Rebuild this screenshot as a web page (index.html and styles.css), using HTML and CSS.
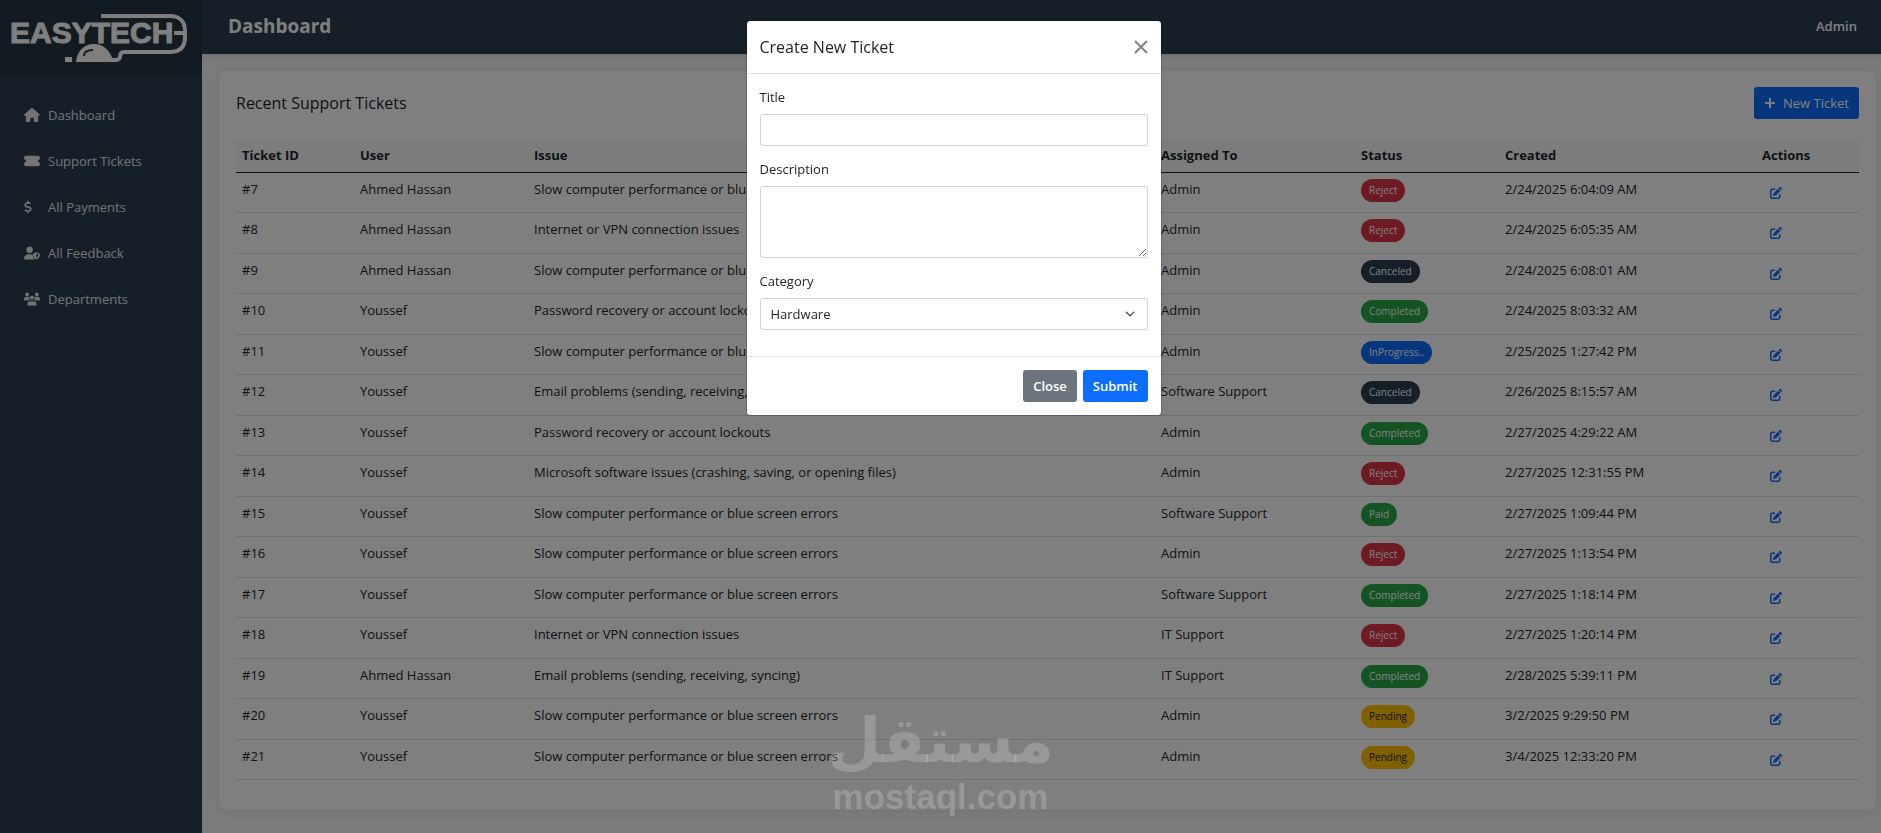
FILE: index.html
```html
<!doctype html>
<html lang="en">

<head>
    <meta charset="utf-8">
    <title>Dashboard</title>
    <link rel="stylesheet" href="styles.css">
</head>

<body>

    <!-- icons used more than once or in the menu -->
    <svg class="icon-defs" aria-hidden="true">
        <symbol id="icon-home" viewBox="0 0 576 512">
            <path d="M575.8 255.5c0 18-15 32.1-32 32.1l-32 0 .7 160.2c0 2.7-.2 5.4-.5 8.1l0 16.2c0 22.1-17.9 40-40 40l-80 0c-22.1 0-40-17.9-40-40l0-88c0-17.7-14.3-32-32-32l-64 0c-17.7 0-32 14.3-32 32l0 88c0 22.1-17.9 40-40 40l-80 0c-22.1 0-40-17.9-40-40l0-184.500-32 0c-18 0-32-14-32-32.100c0-9 3-17 10-24L266.400 8c7-7 15-8 22-8s15 2 21 7L564.800 231.500c8 7 12 15 11 24z" />
        </symbol>
        <symbol id="icon-ticket" viewBox="0 0 576 512">
            <path d="M64 64C29 64 0 93 0 128v64c35 0 64 29 64 64s-29 64-64 64v64c0 35 29 64 64 64h448c35 0 64-29 64-64v-64c-35 0-64-29-64-64s29-64 64-64v-64c0-35-29-64-64-64z" />
        </symbol>
        <symbol id="icon-dollar" viewBox="0 0 320 512">
            <path d="M160 0c17.700 0 32 14.300 32 32l0 35.700c1.600 .2 3.100 .4 4.700 .7c.4 .1 .7 .1 1.100 .2l48 8.800c17.400 3.200 28.900 19.900 25.700 37.200s-19.900 28.900-37.200 25.700l-47.500-8.700c-31.300-4.600-58.900-1.500-78.300 6.200s-27.200 18.300-29 28.100c-2 10.700-.5 16.700 1.200 20.400c1.800 3.900 5.500 8.300 12.800 13.200c16.300 10.700 41.300 17.700 73.700 26.300l2.900 .8c28.600 7.600 63.600 16.800 89.600 33.800c14.200 9.300 27.600 21.900 35.900 39.500c8.500 17.900 10.300 37.900 6.400 59.200c-6.900 38-33.100 63.400-65.600 76.700c-13.700 5.600-28.600 9.200-44.400 11l0 33.400c0 17.700-14.300 32-32 32s-32-14.300-32-32l0-34.900c-.4-.1-.9-.1-1.300-.2l-.2 0c-24.400-3.800-64.500-14.300-91.500-26.300c-16.100-7.200-23.400-26.100-16.200-42.200s26.100-23.400 42.200-16.200c20.900 9.300 55.300 18.500 75.200 21.600c31.900 4.700 58.200 2 76-5.300c16.900-6.900 24.600-16.900 26.800-28.900c1.900-10.600 .4-16.700-1.300-20.400c-1.900-4-5.600-8.400-13-13.300c-16.400-10.700-41.500-17.700-74-26.300l-2.800-.7c-28.500-7.500-63.600-16.700-89.600-33.700c-14.200-9.300-27.500-22-35.800-39.600c-8.400-17.900-10.100-37.900-6.100-59.200C23.700 116 52.300 91.200 84.800 78.300c13.300-5.300 27.900-8.900 43.200-11L128 32c0-17.700 14.300-32 32-32z" />
        </symbol>
        <symbol id="icon-user-shield" viewBox="0 0 640 512">
            <circle cx="224" cy="128" r="128" />
            <path d="M174 304C78 304 0 382 0 478c0 18 14 34 30 34h388c-45-45-72-105-75-178-20-20-50-30-70-30z" />
            <path fill-rule="evenodd" d="M496 224l128 50c10 4 16 12 16 22 0 90-40 180-144 216-104-36-144-126-144-216 0-10 6-18 16-22zm0 66v154c50-28 74-70 78-124z" />
        </symbol>
        <symbol id="icon-users" viewBox="0 0 640 512">
            <circle cx="128" cy="72" r="72" />
            <circle cx="512" cy="72" r="72" />
            <circle cx="320" cy="208" r="84" />
            <path d="M88 170h78c20 0 38 6 52 16-20 50-8 100 28 134H22c-12 0-22-10-22-22 0-80 40-128 88-128zM552 170h-78c-20 0-38 6-52 16 20 50 8 100-28 134h224c12 0 22-10 22-22 0-80-40-128-88-128z" />
            <path d="M244 346h152c64 0 116 60 116 138 0 16-12 28-28 28H156c-16 0-28-12-28-28 0-78 52-138 116-138z" />
        </symbol>
        <symbol id="icon-edit" viewBox="0 0 512 512">
            <path d="M471.600 21.700c-21.900-21.900-57.300-21.900-79.200 0L362.300 51.700l97.900 97.900 30.100-30.100c21.900-21.900 21.900-57.300 0-79.200L471.600 21.700zm-299.200 220c-6.100 6.100-10.800 13.600-13.500 21.900l-29.600 88.800c-2.900 8.600-.6 18.100 5.800 24.600s15.900 8.700 24.600 5.800l88.800-29.600c8.200-2.700 15.700-7.400 21.900-13.500L437.700 172.300 339.700 74.300 172.400 241.700zM96 64C43 64 0 107 0 160L0 416c0 53 43 96 96 96l256 0c53 0 96-43 96-96l0-96c0-17.700-14.300-32-32-32s-32 14.300-32 32l0 96c0 17.700-14.300 32-32 32L96 448c-17.700 0-32-14.300-32-32l0-256c0-17.700 14.300-32 32-32l96 0c17.700 0 32-14.300 32-32s-14.300-32-32-32L96 64z" />
        </symbol>
    </svg>

    <div class="layout">

        <aside class="sidebar">
            <div class="brand">
                <svg class="brand-logo" viewBox="0 0 176 48" role="img" aria-label="EasyTech">
                    <text class="brand-name" x="-1" y="30">EASYTECH</text>
                    <path class="brand-cable" d="M90 3h69c10 0 15 6 15 15v6c0 10-5 15-15 15h-46c-4 0-4 3-4 5-1 3-3 3-6 3h-14" />
                    <path class="brand-cable" d="M163 20h11" />
                    <path class="brand-fill" d="M65 49c1-11 8-18 18-18s16 7 19 16v2z" />
                    <path class="brand-fill" d="M54 44h7v5h-7z" />
                    <path class="brand-shine" d="M73 43c0-4 3-6 9-6" />
                </svg>
            </div>
            <nav class="menu">
                <a href="#"><svg class="menu-icon"><use href="#icon-home" /></svg>Dashboard</a>
                <a href="#"><svg class="menu-icon"><use href="#icon-ticket" /></svg>Support Tickets</a>
                <a href="#"><svg class="menu-icon menu-icon-narrow"><use href="#icon-dollar" /></svg>All Payments</a>
                <a href="#"><svg class="menu-icon"><use href="#icon-user-shield" /></svg>All Feedback</a>
                <a href="#"><svg class="menu-icon"><use href="#icon-users" /></svg>Departments</a>
            </nav>
        </aside>

        <div class="page">
            <header class="topbar">
                <h1>Dashboard</h1>
                <span class="user-name">Admin</span>
            </header>

            <main class="content">
                <section class="card">
                    <div class="card-head">
                        <h2>Recent Support Tickets</h2>
                        <button type="button" class="btn btn-primary btn-new">
                            <svg class="plus" viewBox="0 0 12 12"><path d="M6 1v10M1 6h10" /></svg>
                            New Ticket
                        </button>
                    </div>

                    <table class="tickets">
                        <thead>
                            <tr>
                                <th class="col-id">Ticket ID</th>
                                <th class="col-user">User</th>
                                <th>Issue</th>
                                <th class="col-assigned">Assigned To</th>
                                <th class="col-status">Status</th>
                                <th class="col-created">Created</th>
                                <th class="col-actions">Actions</th>
                            </tr>
                        </thead>
                        <tbody>
                            <tr>
                                <td>#7</td><td>Ahmed Hassan</td><td>Slow computer performance or blue screen errors</td><td>Admin</td>
                                <td><span class="badge badge-danger">Reject</span></td><td>2/24/2025 6:04:09 AM</td>
                                <td><button type="button" class="edit" aria-label="Edit ticket"><svg><use href="#icon-edit" /></svg></button></td>
                            </tr>
                            <tr>
                                <td>#8</td><td>Ahmed Hassan</td><td>Internet or VPN connection issues</td><td>Admin</td>
                                <td><span class="badge badge-danger">Reject</span></td><td>2/24/2025 6:05:35 AM</td>
                                <td><button type="button" class="edit" aria-label="Edit ticket"><svg><use href="#icon-edit" /></svg></button></td>
                            </tr>
                            <tr>
                                <td>#9</td><td>Ahmed Hassan</td><td>Slow computer performance or blue screen errors</td><td>Admin</td>
                                <td><span class="badge badge-dark">Canceled</span></td><td>2/24/2025 6:08:01 AM</td>
                                <td><button type="button" class="edit" aria-label="Edit ticket"><svg><use href="#icon-edit" /></svg></button></td>
                            </tr>
                            <tr>
                                <td>#10</td><td>Youssef</td><td>Password recovery or account lockouts</td><td>Admin</td>
                                <td><span class="badge badge-success">Completed</span></td><td>2/24/2025 8:03:32 AM</td>
                                <td><button type="button" class="edit" aria-label="Edit ticket"><svg><use href="#icon-edit" /></svg></button></td>
                            </tr>
                            <tr>
                                <td>#11</td><td>Youssef</td><td>Slow computer performance or blue screen errors</td><td>Admin</td>
                                <td><span class="badge badge-primary">InProgress..</span></td><td>2/25/2025 1:27:42 PM</td>
                                <td><button type="button" class="edit" aria-label="Edit ticket"><svg><use href="#icon-edit" /></svg></button></td>
                            </tr>
                            <tr>
                                <td>#12</td><td>Youssef</td><td>Email problems (sending, receiving, syncing)</td><td>Software Support</td>
                                <td><span class="badge badge-dark">Canceled</span></td><td>2/26/2025 8:15:57 AM</td>
                                <td><button type="button" class="edit" aria-label="Edit ticket"><svg><use href="#icon-edit" /></svg></button></td>
                            </tr>
                            <tr>
                                <td>#13</td><td>Youssef</td><td>Password recovery or account lockouts</td><td>Admin</td>
                                <td><span class="badge badge-success">Completed</span></td><td>2/27/2025 4:29:22 AM</td>
                                <td><button type="button" class="edit" aria-label="Edit ticket"><svg><use href="#icon-edit" /></svg></button></td>
                            </tr>
                            <tr>
                                <td>#14</td><td>Youssef</td><td>Microsoft software issues (crashing, saving, or opening files)</td><td>Admin</td>
                                <td><span class="badge badge-danger">Reject</span></td><td>2/27/2025 12:31:55 PM</td>
                                <td><button type="button" class="edit" aria-label="Edit ticket"><svg><use href="#icon-edit" /></svg></button></td>
                            </tr>
                            <tr>
                                <td>#15</td><td>Youssef</td><td>Slow computer performance or blue screen errors</td><td>Software Support</td>
                                <td><span class="badge badge-success">Paid</span></td><td>2/27/2025 1:09:44 PM</td>
                                <td><button type="button" class="edit" aria-label="Edit ticket"><svg><use href="#icon-edit" /></svg></button></td>
                            </tr>
                            <tr>
                                <td>#16</td><td>Youssef</td><td>Slow computer performance or blue screen errors</td><td>Admin</td>
                                <td><span class="badge badge-danger">Reject</span></td><td>2/27/2025 1:13:54 PM</td>
                                <td><button type="button" class="edit" aria-label="Edit ticket"><svg><use href="#icon-edit" /></svg></button></td>
                            </tr>
                            <tr>
                                <td>#17</td><td>Youssef</td><td>Slow computer performance or blue screen errors</td><td>Software Support</td>
                                <td><span class="badge badge-success">Completed</span></td><td>2/27/2025 1:18:14 PM</td>
                                <td><button type="button" class="edit" aria-label="Edit ticket"><svg><use href="#icon-edit" /></svg></button></td>
                            </tr>
                            <tr>
                                <td>#18</td><td>Youssef</td><td>Internet or VPN connection issues</td><td>IT Support</td>
                                <td><span class="badge badge-danger">Reject</span></td><td>2/27/2025 1:20:14 PM</td>
                                <td><button type="button" class="edit" aria-label="Edit ticket"><svg><use href="#icon-edit" /></svg></button></td>
                            </tr>
                            <tr>
                                <td>#19</td><td>Ahmed Hassan</td><td>Email problems (sending, receiving, syncing)</td><td>IT Support</td>
                                <td><span class="badge badge-success">Completed</span></td><td>2/28/2025 5:39:11 PM</td>
                                <td><button type="button" class="edit" aria-label="Edit ticket"><svg><use href="#icon-edit" /></svg></button></td>
                            </tr>
                            <tr>
                                <td>#20</td><td>Youssef</td><td>Slow computer performance or blue screen errors</td><td>Admin</td>
                                <td><span class="badge badge-warning">Pending</span></td><td>3/2/2025 9:29:50 PM</td>
                                <td><button type="button" class="edit" aria-label="Edit ticket"><svg><use href="#icon-edit" /></svg></button></td>
                            </tr>
                            <tr>
                                <td>#21</td><td>Youssef</td><td>Slow computer performance or blue screen errors</td><td>Admin</td>
                                <td><span class="badge badge-warning">Pending</span></td><td>3/4/2025 12:33:20 PM</td>
                                <td><button type="button" class="edit" aria-label="Edit ticket"><svg><use href="#icon-edit" /></svg></button></td>
                            </tr>
                        </tbody>
                    </table>
                </section>
            </main>
        </div>

    </div>

    <div class="modal-backdrop">
        <form class="modal" role="dialog" aria-labelledby="modalTitle">
            <div class="modal-header">
                <h2 id="modalTitle">Create New Ticket</h2>
                <button type="button" class="modal-close" aria-label="Close">
                    <svg viewBox="0 0 14 14"><path d="M1 1l12 12M13 1L1 13" /></svg>
                </button>
            </div>
            <div class="modal-body">
                <div class="field">
                    <label for="ticketTitle">Title</label>
                    <input type="text" id="ticketTitle" name="title">
                </div>
                <div class="field">
                    <label for="ticketDescription">Description</label>
                    <textarea id="ticketDescription" name="description" rows="3"></textarea>
                </div>
                <div class="field">
                    <label for="ticketCategory">Category</label>
                    <select id="ticketCategory" name="category">
                        <option>Hardware</option>
                    </select>
                </div>
            </div>
            <div class="modal-footer">
                <button type="button" class="btn btn-secondary">Close</button>
                <button type="submit" class="btn btn-primary">Submit</button>
            </div>
        </form>
    </div>

    <div class="watermark">
        <span class="watermark-ar" lang="ar">مستقل</span>
        <span class="watermark-en">mostaql.com</span>
    </div>

</body>

</html>
```
FILE: styles.css
```css
* {
    box-sizing: border-box;
}

body {
    margin: 0;
    background-color: #f4f6f9;
    color: #212529;
    font-family: "Segoe UI", "Open Sans", "Noto Sans", sans-serif;
    font-size: 13px;
    line-height: 20px;
}

h1, h2 {
    margin: 0;
}

button, input, select, textarea {
    font: inherit;
    color: inherit;
}

.icon-defs {
    display: none;
}

.layout {
    display: flex;
    min-height: 100vh;
}

/* sidebar */
.sidebar {
    flex: none;
    width: 202px;
    background-color: #2c3e50;
}

.brand {
    height: 77px;
    padding: 13px 11px;
    background-color: rgba(0, 0, 0, 0.14);
}

.brand-logo {
    display: block;
    width: 176px;
    height: 48px;
    overflow: visible;
}

.brand-name {
    fill: #fff;
    stroke: #fff;
    stroke-width: 1;
    font-family: "Liberation Sans", Arial, sans-serif;
    font-size: 30px;
    font-weight: bold;
}

.brand-cable {
    fill: none;
    stroke: #fff;
    stroke-width: 4;
}

.brand-fill {
    fill: #fff;
}

.brand-shine {
    fill: none;
    stroke: #26343f;
    stroke-width: 2;
}

.menu {
    display: flex;
    flex-direction: column;
    padding-top: 15px;
}

.menu a {
    display: flex;
    align-items: center;
    gap: 8px;
    padding: 13px 24px;
    color: #e4e7ea;
    text-decoration: none;
}

.menu-icon {
    width: 16px;
    height: 14px;
    fill: currentColor;
}

.menu-icon-narrow {
    width: 8px;
    margin-right: 8px;
}

/* top bar */
.page {
    flex: 1;
    min-width: 0;
}

.topbar {
    display: flex;
    align-items: center;
    justify-content: space-between;
    height: 54px;
    padding: 0 24px 2px 26px;
    background-color: #2c3e50;
    color: #fff;
    box-shadow: 0 2px 4px rgba(0, 0, 0, 0.1);
}

.topbar h1 {
    font-size: 19px;
    font-weight: 700;
}

.user-name {
    font-weight: 600;
}

/* tickets card */
.content {
    padding: 17px 5px 22px 17px;
}

.card {
    padding: 16px 17px 30px;
    background-color: #fff;
    border-radius: 8px;
    box-shadow: 0 0 10px rgba(0, 0, 0, 0.08);
}

.card-head {
    display: flex;
    align-items: center;
    justify-content: space-between;
    margin-bottom: 20px;
}

.card-head h2 {
    font-size: 16px;
    font-weight: 500;
}

.btn {
    height: 32px;
    padding: 0 10px;
    border: 0;
    border-radius: 3px;
    color: #fff;
    font-weight: 600;
}

.btn-primary {
    background-color: #0d6efd;
}

.btn-secondary {
    background-color: #6c757d;
}

.btn-new {
    display: flex;
    align-items: center;
    gap: 7px;
    font-weight: 400;
}

.plus {
    width: 12px;
    height: 12px;
    fill: none;
    stroke: currentColor;
    stroke-width: 2;
}

.tickets {
    width: 100%;
    table-layout: fixed;
    border-collapse: separate;
    border-spacing: 0;
}

.tickets th,
.tickets td {
    padding: 6px;
    text-align: left;
    vertical-align: top;
    white-space: nowrap;
}

.tickets th {
    height: 34px;
    background-color: #f8f9fa;
    border-bottom: 1px solid #212529;
    font-weight: 700;
}

.tickets td {
    height: 40px;
    border-bottom: 1px solid #dee2e6;
}

.tickets tr:nth-child(even) td {
    height: 41px;
}

.col-id { width: 118px; }
.col-user { width: 174px; }
.col-assigned { width: 200px; }
.col-status { width: 144px; }
.col-created { width: 257px; }
.col-actions { width: 103px; }

.badge {
    display: block;
    width: fit-content;
    padding: 4px 8px;
    border-radius: 12px;
    color: #fff;
    font-size: 10px;
    line-height: 15px;
}

.badge-danger { background-color: #dc3545; }
.badge-dark { background-color: #2c3e50; }
.badge-success { background-color: #28a745; }
.badge-primary { background-color: #0d6efd; }

.badge-warning {
    background-color: #ffc107;
    color: #212529;
}

.edit {
    display: block;
    padding: 8px 8px 6px;
    border: 0;
    background: none;
    color: #0d6efd;
}

.edit svg {
    display: block;
    width: 12px;
    height: 12px;
    fill: currentColor;
}

/* modal */
.modal-backdrop {
    position: fixed;
    inset: 0;
    padding-top: 20px;
    background-color: rgba(0, 0, 0, 0.5);
}

.modal {
    width: 416px;
    margin-left: calc(50% - 195px);
    background-color: #fff;
    background-clip: padding-box;
    border: 1px solid rgba(0, 0, 0, 0.2);
    border-radius: 4px;
}

.modal-header {
    display: flex;
    align-items: center;
    justify-content: space-between;
    height: 53px;
    padding: 0 13px;
    border-bottom: 1px solid #dee2e6;
}

.modal-header h2 {
    font-size: 16px;
    font-weight: 500;
}

.modal-close {
    padding: 0;
    border: 0;
    background: none;
    color: #7f7f7f;
}

.modal-close svg {
    display: block;
    width: 14px;
    height: 14px;
    fill: none;
    stroke: currentColor;
    stroke-width: 2;
}

.modal-body {
    padding: 13px;
}

.field {
    display: flex;
    flex-direction: column;
    gap: 7px;
    margin-bottom: 13px;
}

.field input,
.field select,
.field textarea {
    width: 100%;
    height: 32px;
    padding: 5px 10px;
    border: 1px solid #ced4da;
    border-radius: 3px;
    background-color: #fff;
}

.field textarea {
    height: 72px;
    resize: vertical;
}

.field select {
    appearance: none;
    background-image: url("data:image/svg+xml,%3Csvg xmlns='http://www.w3.org/2000/svg' viewBox='0 0 16 16'%3E%3Cpath fill='none' stroke='%23343a40' stroke-linecap='round' stroke-linejoin='round' stroke-width='2' d='m2 5 6 6 6-6'/%3E%3C/svg%3E");
    background-repeat: no-repeat;
    background-position: right 12px center;
    background-size: 10px 10px;
}

.modal-footer {
    display: flex;
    justify-content: flex-end;
    gap: 6px;
    padding: 13px;
    border-top: 1px solid #dee2e6;
}

/* site mark over the page */
.watermark {
    position: fixed;
    left: 50%;
    bottom: 16px;
    display: flex;
    flex-direction: column;
    align-items: center;
    transform: translateX(-50%);
    color: rgba(255, 255, 255, 0.2);
    font-weight: bold;
    pointer-events: none;
}

.watermark-ar {
    font-family: "DejaVu Sans", sans-serif;
    font-size: 62px;
    line-height: 72px;
}

.watermark-en {
    font-family: "Liberation Sans", Arial, sans-serif;
    font-size: 35px;
    line-height: 40px;
}
```
